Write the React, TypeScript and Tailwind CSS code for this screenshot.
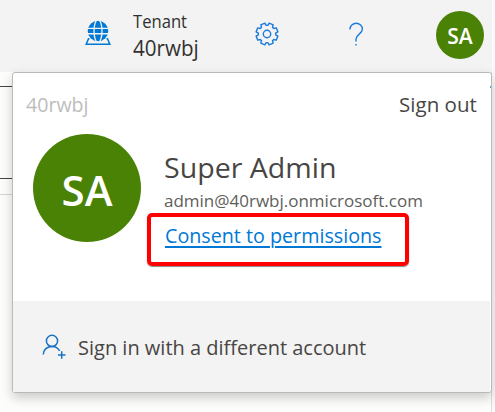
import React from 'react';

function TenantIcon() {
  return (
    <svg width="26" height="26" viewBox="0 0 26 26" fill="none">
      <circle cx="13" cy="11" r="10.300" fill="#0078d4" />
      <ellipse cx="13" cy="11" rx="4" ry="11.500" stroke="#f3f3f3" strokeWidth="1.300" />
      <path d="M1 8.400h24M1 13.700h24" stroke="#f3f3f3" strokeWidth="1.400" />
      <path d="M4.500 18.800H3.500L1.200 24.200h23.600l-2.300-5.400h-1" stroke="#0078d4" strokeWidth="1.500" />
    </svg>
  );
}

function GearIcon() {
  const teeth: string[] = [];
  for (let i = 0; i < 8; i++) {
    const a = (i * Math.PI) / 4 + Math.PI / 8;
    for (const [d, r] of [[-0.29, 8.7], [-0.2, 11.1], [0.2, 11.1], [0.29, 8.7]]) {
      teeth.push(`${(12 + r * Math.cos(a + d)).toFixed(2)},${(12 + r * Math.sin(a + d)).toFixed(2)}`);
    }
  }
  return (
    <svg width="24" height="24" viewBox="0 0 24 24" fill="none" stroke="#1b7bdc" strokeWidth="1.400" strokeLinejoin="round">
      <polygon points={teeth.join(' ')} />
      <circle cx="12" cy="12" r="3.700" />
    </svg>
  );
}

function HelpIcon() {
  return (
    <svg width="16" height="24" viewBox="0 0 16 24" fill="none" stroke="#1b7bdc" strokeWidth="1.400">
      <path d="M2 7.500V7a6.200 5.800 0 0 1 12.400 0c0 5.200-6.400 5.500-6.400 10v2.500" />
      <path d="M8 22v1.500" />
    </svg>
  );
}

function AddPersonIcon() {
  return (
    <svg width="24" height="26" viewBox="0 0 24 26" fill="none" stroke="#1971c2" strokeWidth="1.500">
      <circle cx="10" cy="6.900" r="5.600" />
      <path d="M1.300 20.500a8.700 8.200 0 0 1 16.300-3.700M19.700 17.200v7.500M16 21h7.500" />
    </svg>
  );
}

export default function App() {
  return (
    <div className="relative h-[412px] w-[495px] overflow-hidden bg-[#fdfdfc] font-['Open_Sans','Noto_Sans',sans-serif] whitespace-nowrap">
      <header className="flex h-[72px] w-[492px] bg-[#f3f3f3]">
        <div className="mt-[20px] ml-[85px] h-[26px] w-[26px]"><TenantIcon /></div>
        <div className="mt-[8px] ml-[22px] w-[100px] text-[#323130]">
          <div className="origin-left scale-x-[0.95] text-[17.500px] leading-[26px]">Tenant</div>
          <div className="origin-left scale-x-[0.98] text-[21px] leading-[28px]">40rwbj</div>
        </div>
        <div className="mt-[22px] ml-[22px] w-[24px]"><GearIcon /></div>
        <div className="mt-[22px] ml-[69px] w-[16px]"><HelpIcon /></div>
        <div className="mt-[11px] ml-[72px] flex h-[48px] w-[48px] items-center justify-center rounded-full bg-[#498205] pt-[4px] text-[21px] font-semibold text-white">
          <span>SA</span>
        </div>
      </header>
      <div className="h-[14px]" />
      <div className="h-[93px] border-y border-[#444]" />
      <div className="h-[16px] border-b border-[#d5d5d5]" />
      <div className="absolute top-0 left-[491px] h-[412px] w-[4px] border-l border-[#ddd] bg-[#fafafa]" />
      <div className="absolute top-0 left-[491px] h-[72px] w-px bg-[#f3f3f3]" />

      <section className="absolute top-[72px] left-[12px] flex h-[321px] w-[480px] flex-col rounded-[3px] border border-[#bababa] bg-white text-[#484644] shadow-[0_5px_12px_rgba(0,0,0,0.2)]">
        <div className="absolute top-[13px] right-0 h-[2px] w-px bg-[#4ba0e0]" />
        <div className="flex h-[60px] justify-between pt-[17px] pr-[14px] pl-[13px] text-[20px] leading-[30px]">
          <span className="origin-left scale-x-[0.98] text-[#bdbdbd]">40rwbj</span>
          <span className="origin-right scale-x-[1.025]">Sign out</span>
        </div>
        <div className="flex h-[168px] pl-[20px]">
          <div className="mt-px flex h-[108px] w-[108px] items-center justify-center rounded-full bg-[#498205] pt-[3px] text-[42px] font-semibold text-white">
            <span>SA</span>
          </div>
          <div className="ml-[23px] flex w-[300px] flex-col items-start pt-[14px]">
            <div className="origin-left scale-x-[1.02] text-[28px] leading-[40px]">Super Admin</div>
            <div className="h-[26px] origin-left scale-x-[1.03] text-[16.500px] leading-[28px] text-[#605e5c]">admin@40rwbj.onmicrosoft.com</div>
            <a className="-ml-[17px] flex h-[53px] w-[262px] rounded-[5px] border-[4.500px] border-[#fe0000] pt-[4px] pl-[14px] text-[20px] leading-[30px] text-[#0078d4] shadow-[0_1px_1px_#888]">
              <span className="h-[30px] origin-left scale-x-[0.985] underline decoration-[2px] underline-offset-[3px]">Consent to permissions</span>
            </a>
          </div>
        </div>
        <footer className="mr-px flex flex-1 bg-[#f3f3f3] pl-[29px]">
          <div className="mt-[33px] w-[24px]"><AddPersonIcon /></div>
          <div className="mt-[32px] ml-[12px] text-[20px] leading-[30px]">Sign in with a different account</div>
        </footer>
      </section>
    </div>
  );
}
